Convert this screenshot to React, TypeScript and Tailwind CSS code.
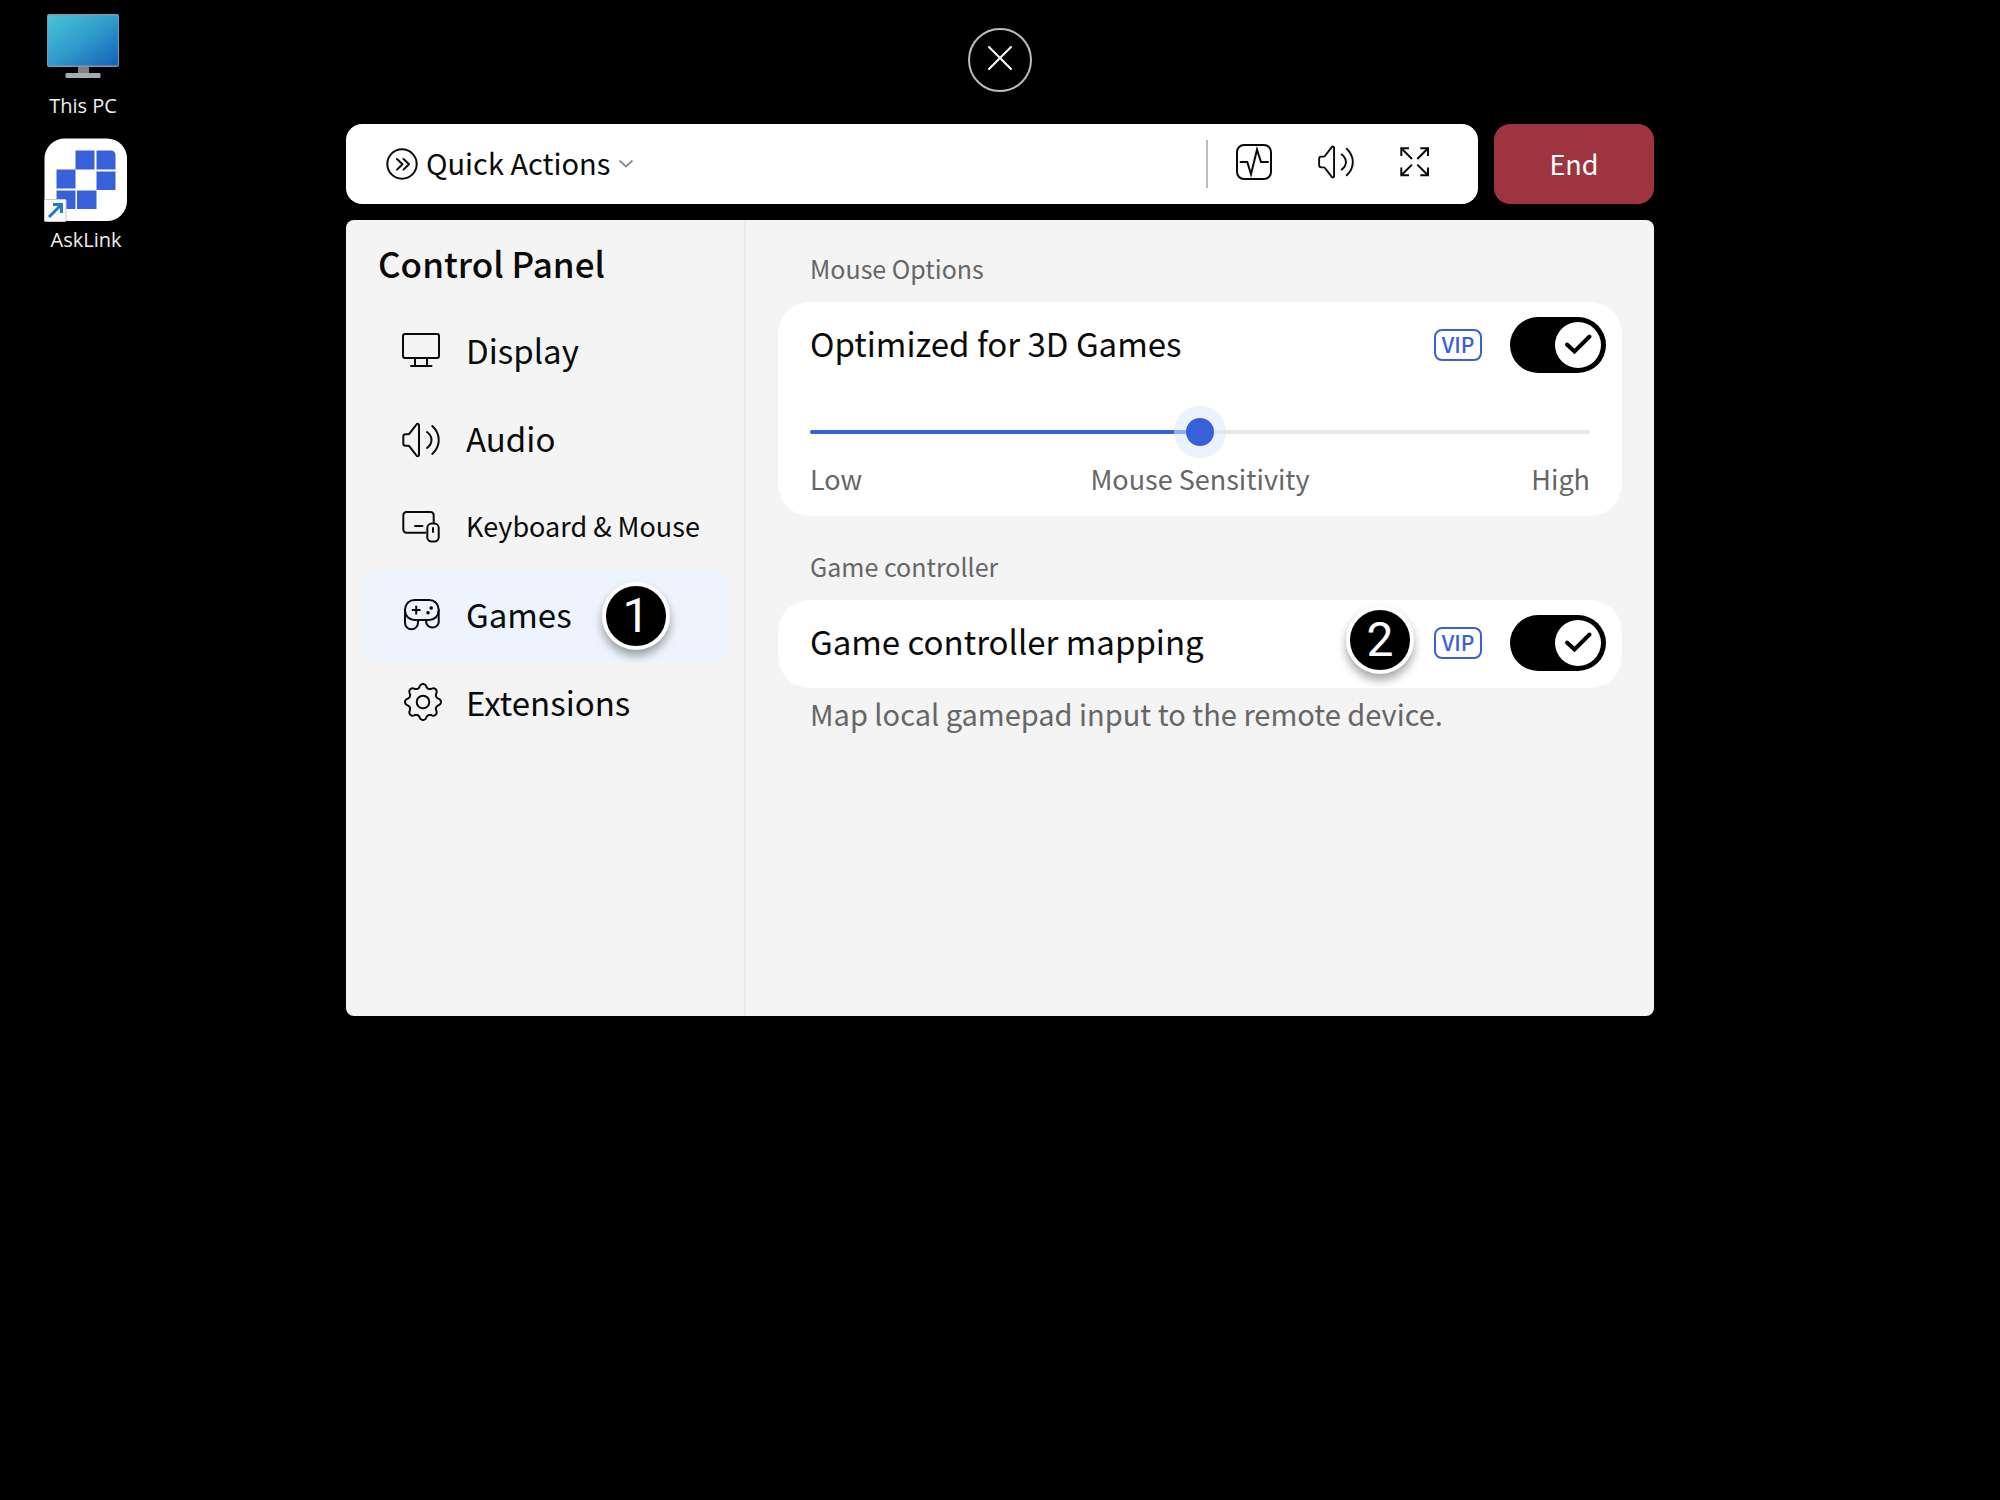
import { useState } from "react";
import type { ReactNode } from "react";

function Svg({ children, className = "size-10", viewBox = "0 0 40 40" }: { children: ReactNode; className?: string; viewBox?: string }) {
  return (
    <svg
      viewBox={viewBox}
      className={`shrink-0 overflow-visible ${className}`}
      fill="none"
      stroke="currentColor"
      strokeWidth={2}
      strokeLinecap="round"
      strokeLinejoin="round"
      aria-hidden="true"
    >
      {children}
    </svg>
  );
}

function SpeakerIcon({ className }: { className?: string }) {
  return (
    <Svg className={className}>
      <path d="M3.3 16.5a2.2 2.2 0 0 1 2.2-2.2h2.7a1.5 1.5 0 0 0 1.2-.6L16.6 4.400a1.300 1.300 0 0 1 2.400.8v29.600a1.300 1.300 0 0 1-2.400.8L9.400 26.300a1.500 1.500 0 0 0-1.200-.6H5.500a2.200 2.200 0 0 1-2.200-2.200z" />
      <path d="M27 12c6 4.500 6 11.500 0 16M32.300 6c8.600 8 8.600 20 0 28" />
    </Svg>
  );
}

function PulseIcon() {
  return (
    <Svg viewBox="2 0 40 40">
      <rect x="3" y="3" width="34" height="34" rx="7" />
      <path d="M6.500 20h6.800L17 32.300 23 7.700 27 20h7" strokeLinejoin="miter" />
    </Svg>
  );
}

function ExpandIcon() {
  return (
    <Svg>
      <g strokeLinecap="butt" strokeLinejoin="miter">
        <path d="M15 6.300H7.300V14M26.300 6.300H34V14M15 33.300H7.300V25.600M26.300 33.300H34V25.600" />
        <path d="M7.300 6.300l10.700 10.700M34 6.300L23.300 17M7.300 33.300L18 22.600M34 33.300L23.300 22.600" />
      </g>
    </Svg>
  );
}

function DisplayIcon() {
  return (
    <Svg>
      <rect x="3" y="2" width="36" height="24" rx="2" />
      <path d="M15 26v8M27 26v8M11 34h20.500" />
    </Svg>
  );
}

function KeyboardMouseIcon() {
  return (
    <Svg>
      <path d="M25.500 24.700H6.500a3.200 3.200 0 0 1-3.200-3.200V7.300a3.200 3.200 0 0 1 3.200-3.200h24a3.200 3.200 0 0 1 3.200 3.200v7.500M15 18h7.500M33 20v4" />
      <rect x="27.300" y="15.600" width="11.400" height="18" rx="4.300" />
    </Svg>
  );
}

function GamepadIcon() {
  return (
    <Svg>
      <rect x="5" y="4" width="33.700" height="20" rx="9.500" />
      <path d="M5 14.500v12.300a6.500 6.500 0 0 0 13 0V24M38.700 14.500v12.300a6.500 6.500 0 0 1-12.500 0V24" />
      <path d="M11.800 14h8.800M16.200 9.700v8.700" strokeLinecap="butt" />
      <circle cx="31.200" cy="12" r="1.800" fill="currentColor" stroke="none" />
      <circle cx="28" cy="16.700" r="1.800" fill="currentColor" stroke="none" />
    </Svg>
  );
}

const gearPath =
  Array.from({ length: 160 }, (_, i) => {
    const angle = (i / 160) * Math.PI * 2;
    const wave = Math.cos(8 * angle);
    const radius = 16.1 + 1.9 * Math.sign(wave) * Math.pow(Math.abs(wave), 0.75);
    const x = (23 + radius * Math.sin(angle)).toFixed(2);
    const y = (18 - radius * Math.cos(angle)).toFixed(2);
    return `${i === 0 ? "M" : "L"}${x} ${y}`;
  }).join("") + "z";

function GearIcon() {
  return (
    <Svg>
      <path d={gearPath} />
      <circle cx="23" cy="18" r="6.300" />
    </Svg>
  );
}

function StepMarker({ step, className }: { step: number; className: string }) {
  return (
    <span
      className={`absolute flex size-17 items-center justify-center rounded-full border-4 border-white bg-black font-[Roboto,sans-serif] text-5xl font-normal text-white shadow-[0_6px_10px_rgba(0,0,0,0.35)] ${className}`}
    >
      {step}
    </span>
  );
}

const navItems = [
  { label: "Display", icon: <DisplayIcon />, size: "text-[33px]" },
  { label: "Audio", icon: <SpeakerIcon />, size: "text-[33px]" },
  { label: "Keyboard & Mouse", icon: <KeyboardMouseIcon />, size: "text-[27px]" },
  { label: "Games", icon: <GamepadIcon />, size: "text-[33px]", step: 1 },
  { label: "Extensions", icon: <GearIcon />, size: "text-[33px]" },
];

function Sidebar() {
  const [active, setActive] = useState("Games");
  return (
    <nav className="w-[400px] shrink-0 border-r-2 border-[#e9e9e9] pt-[22px] pr-3.5 pb-8 pl-4" aria-label="Control Panel">
      <h1 className="pl-4 text-[35px] leading-[42px] font-medium">Control Panel</h1>
      <ul className="pt-6">
        {navItems.map((item) => (
          <li key={item.label} className="relative">
            <button
              type="button"
              onClick={() => setActive(item.label)}
              className={`flex h-22 w-full items-center gap-[26px] rounded-2xl pl-[38px] text-left ${active === item.label ? "bg-[#edf4fd]" : ""}`}
            >
              {item.icon}
              <span className={`pb-[3px] whitespace-nowrap ${item.size}`}>{item.label}</span>
            </button>
            {item.step && <StepMarker step={item.step} className="top-2.5 left-60" />}
          </li>
        ))}
      </ul>
    </nav>
  );
}

function ToggleRow({ id, label, step }: { id: string; label: string; step?: number }) {
  return (
    <div className="relative flex h-22 items-center pr-4 pb-0.5 pl-8">
      <label htmlFor={id} className="flex-1 pb-0.5 text-[33px]">
        {label}
      </label>
      {step && <StepMarker step={step} className="top-1.5 right-52" />}
      <span className="mr-7 flex h-8 w-12 items-center justify-center rounded-lg border-2 border-[#3860d8] pb-0.5 text-[21px] leading-7 font-medium text-[#3860d8]">
        VIP
      </span>
      <span className="relative flex">
        <input id={id} type="checkbox" role="switch" defaultChecked className="peer h-14 w-24 appearance-none rounded-full bg-gray-400 checked:bg-black" />
        <span className="pointer-events-none absolute top-[5px] left-[5px] flex size-[46px] items-center justify-center rounded-full bg-white peer-checked:right-[5px] peer-checked:left-auto">
          <svg viewBox="0 0 46 46" className="size-full" fill="none" stroke="#000" strokeWidth={4} strokeLinecap="round" strokeLinejoin="miter" aria-hidden="true">
            <path d="M12 22.500l7.500 7 15-15" />
          </svg>
        </span>
      </span>
    </div>
  );
}

function Settings() {
  const [sensitivity, setSensitivity] = useState(50);
  return (
    <main className="min-w-0 flex-1 px-8 pb-8">
      <h2 className="flex h-[82px] items-center px-8 pt-4 text-[25px] text-[#666]">Mouse Options</h2>
      <section className="rounded-[32px] bg-white">
        <ToggleRow id="optimized" label="Optimized for 3D Games" />
        <div className="px-8 pt-4 pb-4">
          <div className="relative flex h-[52px] items-center">
            <div className="h-1 w-full rounded-full bg-[#e8e8e8]">
              <div className="h-1 rounded-full bg-[#3860d8]" style={{ width: `${sensitivity}%` }} />
            </div>
            <input
              id="sensitivity"
              type="range"
              min={0}
              max={100}
              value={sensitivity}
              onChange={(event) => setSensitivity(Number(event.target.value))}
              className="absolute inset-0 size-full appearance-none bg-transparent [&::-webkit-slider-thumb]:size-7 [&::-webkit-slider-thumb]:appearance-none [&::-webkit-slider-thumb]:rounded-full [&::-webkit-slider-thumb]:bg-[#3860d8] [&::-webkit-slider-thumb]:shadow-[0_0_0_12px_rgba(219,231,255,0.55)]"
            />
          </div>
          <div className="flex h-[42px] items-center justify-between text-[27px] text-[#666]">
            <span className="flex-1">Low</span>
            <label htmlFor="sensitivity">Mouse Sensitivity</label>
            <span className="flex-1 text-right">High</span>
          </div>
        </div>
      </section>
      <h2 className="flex h-[84px] items-center px-8 pt-[18px] text-[25px] text-[#666]">Game controller</h2>
      <section className="rounded-[32px] bg-white">
        <ToggleRow id="mapping" label="Game controller mapping" step={2} />
      </section>
      <p className="px-8 pt-1 text-[29px] leading-[42px] text-[#666]">Map local gamepad input to the remote device.</p>
    </main>
  );
}

function Toolbar() {
  return (
    <header className="flex h-20 gap-4">
      <div className="flex min-w-0 flex-1 items-center rounded-2xl bg-white pr-11 pl-10">
        <button type="button" className="flex items-center gap-2 text-[29px]">
          <Svg className="size-8" viewBox="0 0 32 32">
            <circle cx="16" cy="16" r="14.700" />
            <path d="M11 11l5.500 5.300-5.500 5.300M17.500 11l5.500 5.300-5.500 5.300" />
          </Svg>
          <span className="pb-0.5">Quick Actions</span>
          <svg viewBox="0 0 16 16" className="size-4" fill="none" stroke="#8c8c8c" strokeWidth={2} aria-hidden="true">
            <path d="M1.500 4.500l6.500 6 6.500-6" />
          </svg>
        </button>
        <div className="ml-auto flex items-center gap-10">
          <span className="-mr-3 h-12 w-0.5 bg-[#bcbcbc]" />
          <button type="button" aria-label="Performance" className="pb-1">
            <PulseIcon />
          </button>
          <button type="button" aria-label="Sound" className="pb-1">
            <SpeakerIcon className="size-[38px]" />
          </button>
          <button type="button" aria-label="Full screen" className="pb-1">
            <ExpandIcon />
          </button>
        </div>
      </div>
      <button type="button" className="w-40 rounded-2xl bg-[#9d3440] text-[27px] text-white">
        End
      </button>
    </header>
  );
}

function PcIcon() {
  return (
    <svg viewBox="0 0 76 68" className="h-17 w-19" aria-hidden="true">
      <defs>
        <linearGradient id="screen" x1="0" y1="0" x2="1" y2="1">
          <stop offset="0" stopColor="#45c6d8" />
          <stop offset="0.500" stopColor="#2f9bcb" />
          <stop offset="1" stopColor="#1560b8" />
        </linearGradient>
      </defs>
      <rect x="2" y="2" width="72" height="53" rx="2" fill="#7f9aa6" />
      <rect x="3" y="3.500" width="70" height="50" rx="1" fill="url(#screen)" />
      <rect x="33" y="55" width="11" height="8" fill="#7c8388" />
      <rect x="20.500" y="61" width="35" height="5" rx="1" fill="#a6abae" />
    </svg>
  );
}

function AskLinkIcon() {
  return (
    <svg viewBox="0 0 84 84" className="size-21" aria-hidden="true">
      <path d="M21 .5H63a20 20 0 0 1 20 20V63a20 20 0 0 1-20 20H.5V20.500A20 20 0 0 1 21 .5z" fill="#fff" />
      <g fill="#3860d8">
        <path d="M31.500 12.500h19v19h-19z" />
        <path d="M52.500 12.500h14q5 0 5 5v14h-19z" />
        <path d="M12.500 31.500h19v19h-19z" />
        <path d="M52.500 33.500h19v18.500h-19z" />
        <path d="M12.500 52.500h19v18.500h-19z" />
        <path d="M33 52.500h19.500v18.500H33z" />
      </g>
      <rect x=".5" y="61.500" width="21.500" height="22" rx="1" fill="#fafafa" stroke="#c8c8c8" />
      <path d="M5 79l12-12M9 66.500h8.500V75" fill="none" stroke="#2579c9" strokeWidth="3" />
    </svg>
  );
}

function Desktop() {
  return (
    <div className="absolute top-3 left-11 flex flex-col items-start font-['Open_Sans',sans-serif] text-xl leading-7 text-[#eee]">
      <a href="#this-pc" className="flex w-[78px] flex-col items-center gap-3">
        <PcIcon />
        <span className="whitespace-nowrap">This PC</span>
      </a>
      <a href="#asklink" className="mt-[18px] flex w-[84px] flex-col items-center gap-1">
        <AskLinkIcon />
        <span>AskLink</span>
      </a>
    </div>
  );
}

export default function App() {
  return (
    <div className="relative min-h-screen bg-black font-['Noto_Sans_CJK_SC',sans-serif] text-[#0a0a0a]">
      <Desktop />
      <div className="mx-auto flex max-w-[1308px] flex-col pt-7">
        <button
          type="button"
          aria-label="Close"
          className="mb-8 flex size-16 items-center justify-center self-center rounded-full border-2 border-[#bdbdbd] text-white"
        >
          <Svg className="mb-1 size-6" viewBox="0 0 24 24">
            <path d="M1 1l22 22M23 1L1 23" />
          </Svg>
        </button>
        <Toolbar />
        <div className="mt-4 flex min-h-[796px] rounded-lg bg-[#f4f4f4]">
          <Sidebar />
          <Settings />
        </div>
      </div>
    </div>
  );
}
